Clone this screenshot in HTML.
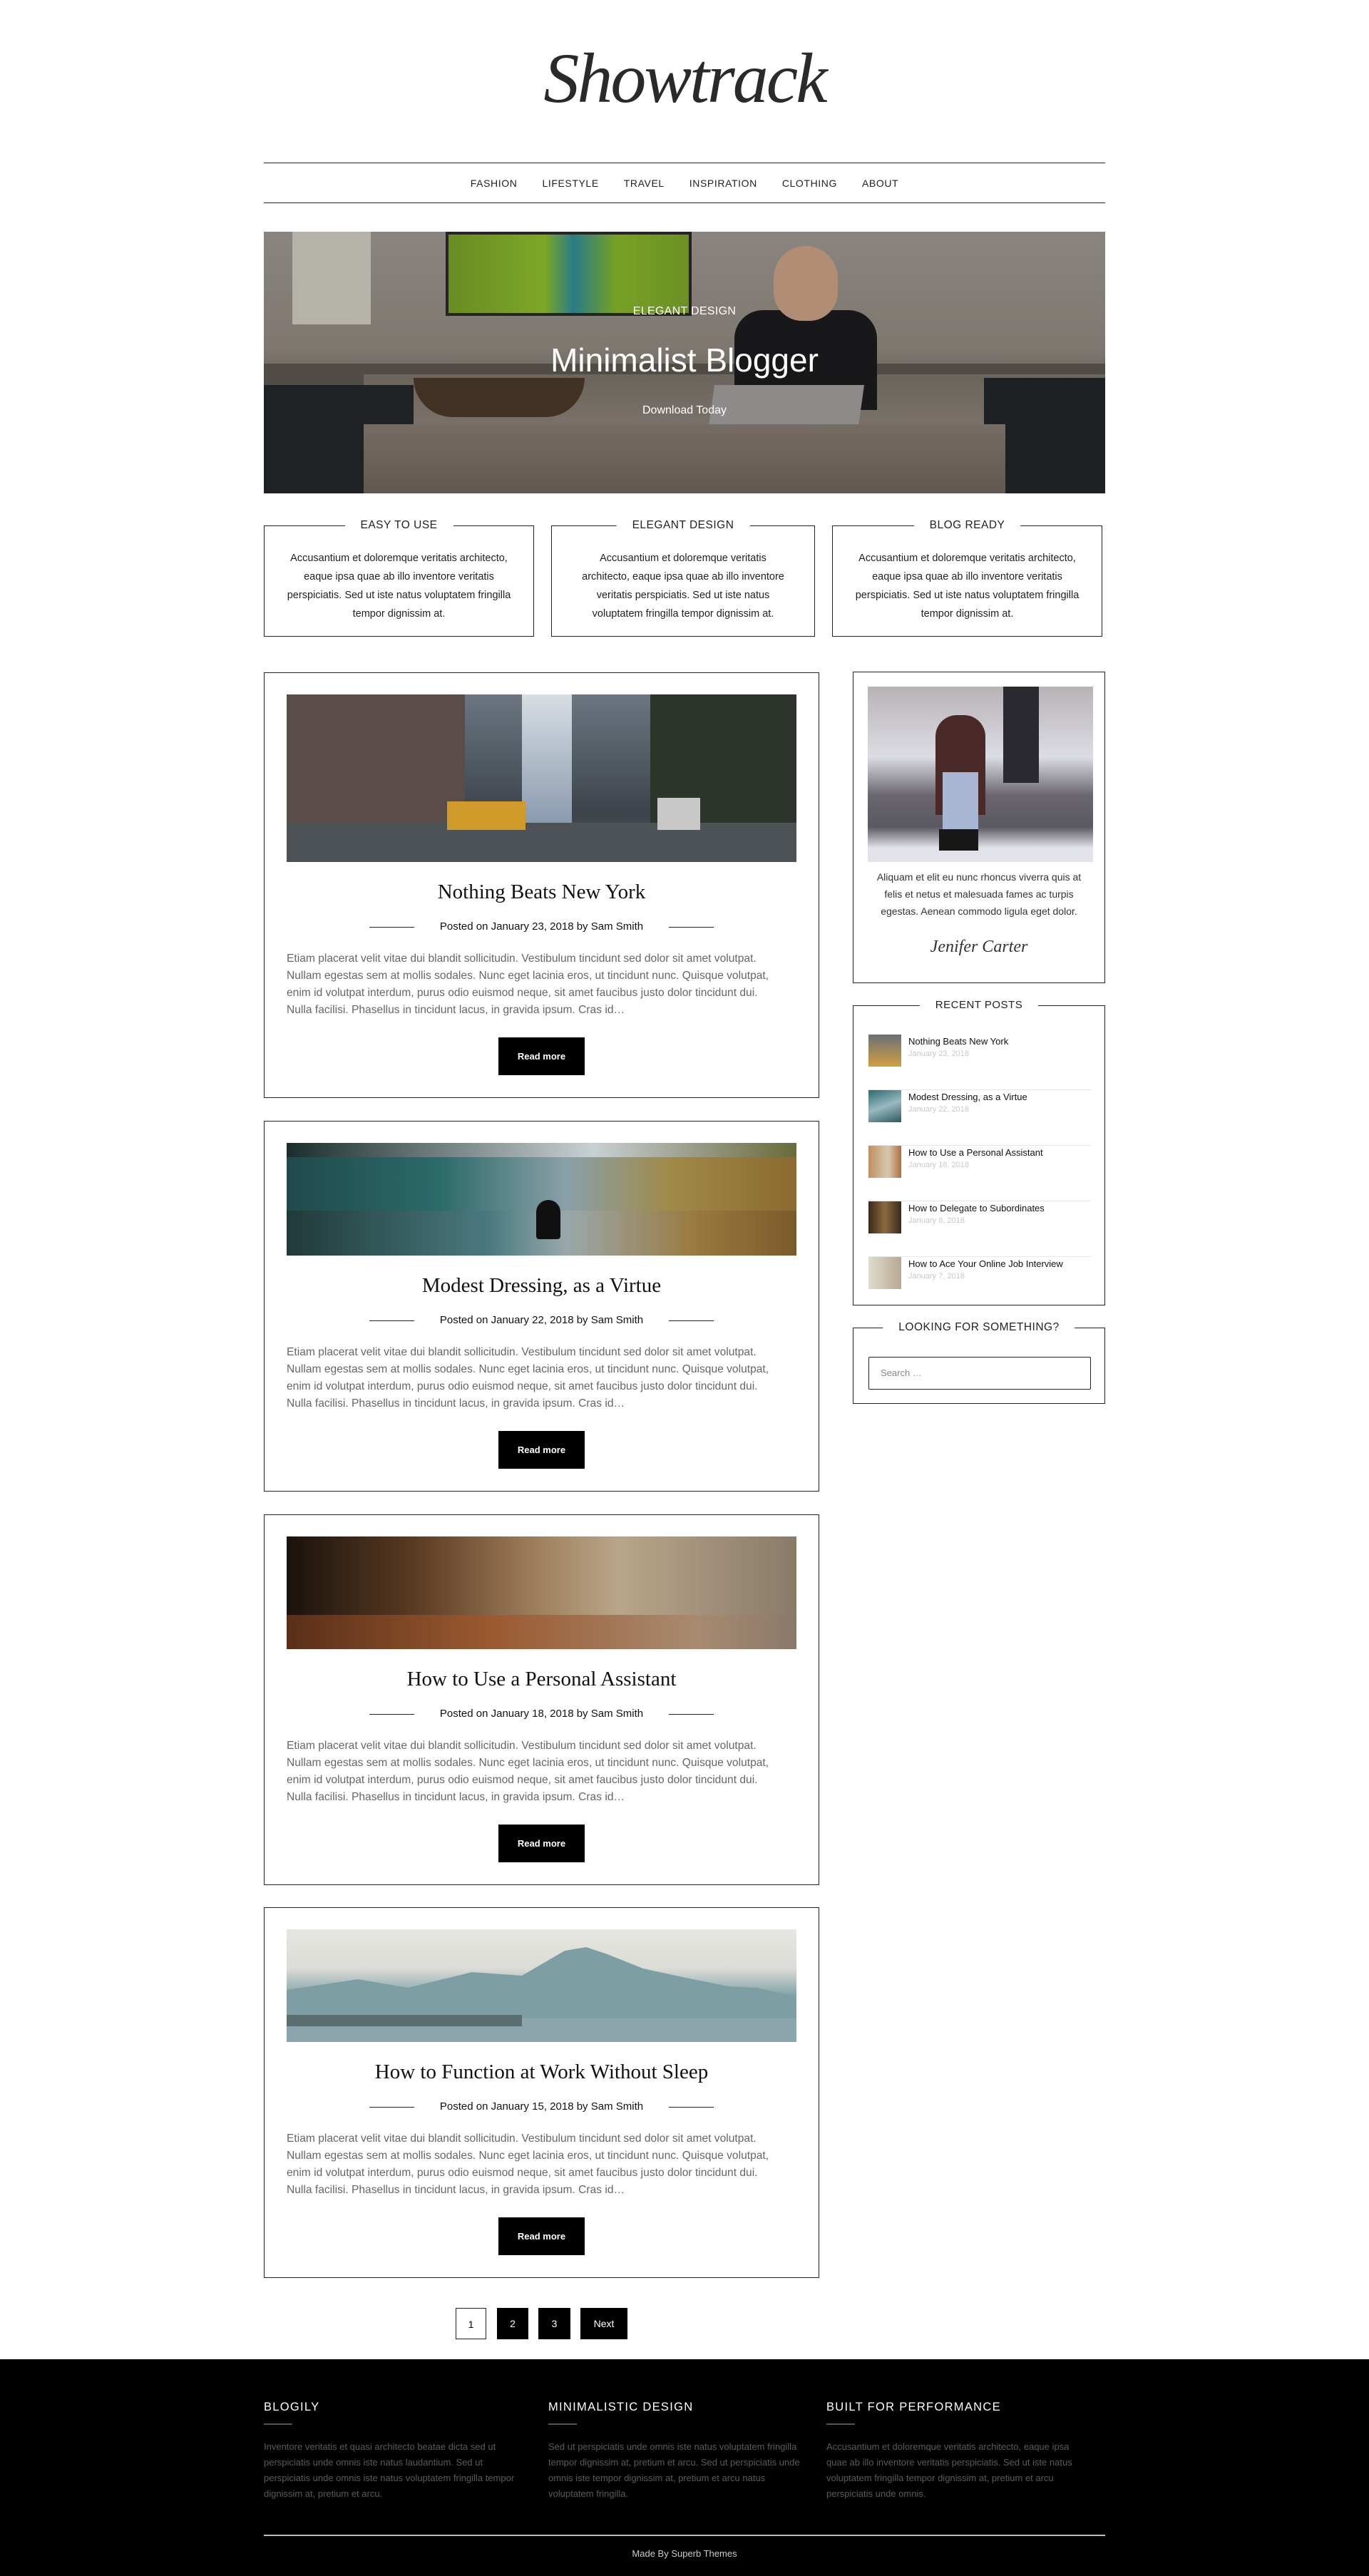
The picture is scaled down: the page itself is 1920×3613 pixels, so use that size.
<!DOCTYPE html>
<html><head><meta charset="utf-8"><style>
*{margin:0;padding:0;box-sizing:border-box}
body{width:1920px;height:3613px;position:relative;background:#fff;font-family:"Liberation Sans",sans-serif;color:#222;overflow:hidden}
.abs{position:absolute}
.logo{left:760px;top:40px;width:400px;height:140px;text-align:center;font-family:"Liberation Serif",serif;font-style:italic;font-size:100px;line-height:140px;color:#2a2a2a;letter-spacing:-3px}
.hl{left:370px;width:1180px;height:1px;background:#222}
.nav{left:370px;top:229px;width:1180px;height:55px;display:flex;justify-content:center;align-items:center;gap:35px;font-size:14px;letter-spacing:.6px;color:#222}
.hero{left:370px;top:325px;width:1180px;height:367px;overflow:hidden;background:#8a847c}
.hero div{position:absolute}
.feat{border:1px solid #222;top:737px;height:156px;font-size:14.5px;line-height:26px;text-align:center;padding:32px 26px 0;color:#222}
.ttl{position:absolute;top:-11px;left:50%;transform:translateX(-50%);background:#fff;padding:0 22px;font-size:15.5px;letter-spacing:.5px;line-height:20px;white-space:nowrap;color:#222}
.card{left:370px;width:779px;border:1px solid #222;padding:30px 31px 31px;text-align:center}
.card .img{width:715px;overflow:hidden;position:relative}
.card h2{font-family:"Liberation Serif",serif;font-weight:normal;font-size:29px;line-height:40px;margin-top:22px;color:#111}
.meta{margin-top:19px;line-height:20px;font-size:15px;position:relative;display:inline-block;padding:0 36px;color:#111}
.meta:before,.meta:after{content:"";position:absolute;top:10px;width:63px;height:1px;background:#222}
.meta:before{right:100%}.meta:after{left:100%}
.ex{margin-top:23px;text-align:left;font-size:15.6px;line-height:24px;color:#666;white-space:nowrap}
.btn{display:inline-block;margin-top:26px;width:121px;height:53px;background:#000;color:#fff;font-size:13px;font-weight:bold;line-height:53px}
.side{left:1196px;width:354px;border:1px solid #222}
.rp{position:absolute;left:21px;width:312px;height:78px;border-bottom:1px solid #e5e5e5}
.rp .th{position:absolute;left:0;top:0;width:46px;height:45px}
.rp .t{position:absolute;left:56px;top:2px;font-size:13px;color:#111}
.rp .d{position:absolute;left:56px;top:21px;font-size:11px;color:#c8c8c8}
.pg{top:3237px;height:44px;background:#000;color:#fff;font-size:14px;line-height:44px;text-align:center}
.foot{left:0;top:3309px;width:1920px;height:304px;background:#000}
.fc{position:absolute;top:55px;width:370px}
.fc h4{font-weight:normal;color:#fff;font-size:16.5px;letter-spacing:1.3px;line-height:24px}
.fc i{display:block;width:40px;height:2px;background:#555;margin-top:11px}
.fc p{margin-top:20px;font-size:13px;line-height:22px;color:#5a5a5a}
</style></head><body>

<div class="abs logo">Showtrack</div>
<div class="abs hl" style="top:228px"></div>
<div class="abs hl" style="top:284px"></div>
<div class="abs nav"><span>FASHION</span><span>LIFESTYLE</span><span>TRAVEL</span><span>INSPIRATION</span><span>CLOTHING</span><span>ABOUT</span></div>

<div class="abs hero">
 <div style="left:0;top:0;width:1180px;height:367px;background:linear-gradient(180deg,#9d9890 0%,#8f8880 45%,#5d5650 70%,#7d746c 100%)"></div>
 <div style="left:255px;top:0;width:345px;height:118px;background:linear-gradient(90deg,#76a02a,#8fbf2c 40%,#2f8d9a 52%,#88b828 70%,#7aa52a);border:4px solid #2a2a26"></div>
 <div style="left:40px;top:0;width:110px;height:130px;background:#cfcbc2"></div>
 <div style="left:0;top:185px;width:1180px;height:40px;background:#5d564f"></div>
 <div style="left:140px;top:200px;width:1040px;height:100px;background:linear-gradient(180deg,#7a726a,#91887f)"></div>
 <div style="left:0;top:215px;width:210px;height:152px;background:#24272b"></div>
 <div style="left:1010px;top:205px;width:170px;height:162px;background:#232629"></div>
 <div style="left:660px;top:110px;width:200px;height:140px;background:#1c1c1e;border-radius:40px 40px 0 0"></div>
 <div style="left:715px;top:20px;width:90px;height:105px;background:#c9a185;border-radius:45px 45px 40px 40px"></div>
 <div style="left:625px;top:215px;width:210px;height:100px;background:#a29e9c;transform:skewX(-8deg)"></div>
 <div style="left:140px;top:270px;width:900px;height:97px;background:linear-gradient(180deg,#867b72,#6e655d)"></div>
 <div style="left:210px;top:205px;width:240px;height:55px;background:#4a3a28;border-radius:0 0 120px 120px"></div>
 <div style="left:0;top:0;width:1180px;height:367px;background:rgba(0,0,0,.12)"></div>
 <div style="left:0;top:103px;width:1180px;text-align:center;color:#fff;font-size:16px;letter-spacing:.3px">ELEGANT DESIGN</div>
 <div style="left:0;top:150px;width:1180px;text-align:center;color:#fff;font-size:46px;line-height:60px">Minimalist Blogger</div>
 <div style="left:0;top:242px;width:1180px;text-align:center;color:#fff;font-size:16px">Download Today</div>
</div>

<div class="abs feat" style="left:370px;width:379px"><span class="ttl">EASY TO USE</span>Accusantium et doloremque veritatis architecto, eaque ipsa quae ab illo inventore veritatis perspiciatis. Sed ut iste natus voluptatem fringilla tempor dignissim at.</div>
<div class="abs feat" style="left:773px;width:370px;padding:32px 42px 0"><span class="ttl">ELEGANT DESIGN</span>Accusantium et doloremque veritatis architecto, eaque ipsa quae ab illo inventore veritatis perspiciatis. Sed ut iste natus voluptatem fringilla tempor dignissim at.</div>
<div class="abs feat" style="left:1167px;width:379px"><span class="ttl">BLOG READY</span>Accusantium et doloremque veritatis architecto, eaque ipsa quae ab illo inventore veritatis perspiciatis. Sed ut iste natus voluptatem fringilla tempor dignissim at.</div>

<!-- card 1 -->
<div class="abs card" style="top:943px">
 <div class="img" style="height:235px;background:linear-gradient(180deg,#6d7580 0%,#4e5660 45%,#3d434a 70%,#55595e 100%)">
  <div class="abs" style="left:330px;top:0;width:70px;height:180px;background:linear-gradient(180deg,#d8dde2,#8a9bb0)"></div>
  <div class="abs" style="left:0;top:0;width:250px;height:200px;background:#5a4c48"></div>
  <div class="abs" style="left:510px;top:0;width:205px;height:200px;background:#2d342c"></div>
  <div class="abs" style="left:0;top:180px;width:715px;height:55px;background:#4d5257"></div>
  <div class="abs" style="left:225px;top:150px;width:110px;height:40px;background:#d09a2a"></div>
  <div class="abs" style="left:520px;top:145px;width:60px;height:45px;background:#c8c8c8"></div>
 </div>
 <h2>Nothing Beats New York</h2>
 <div class="meta">Posted on January 23, 2018 by Sam Smith</div>
 <div class="ex">Etiam placerat velit vitae dui blandit sollicitudin. Vestibulum tincidunt sed dolor sit amet volutpat.<br>Nullam egestas sem at mollis sodales. Nunc eget lacinia eros, ut tincidunt nunc. Quisque volutpat,<br>enim id volutpat interdum, purus odio euismod neque, sit amet faucibus justo dolor tincidunt dui.<br>Nulla facilisi. Phasellus in tincidunt lacus, in gravida ipsum. Cras id…</div>
 <div class="btn">Read more</div>
</div>

<!-- card 2 -->
<div class="abs card" style="top:1572px">
 <div class="img" style="height:158px;background:linear-gradient(90deg,#1f4a4c 0%,#2c6a6a 30%,#8aa0a8 55%,#a08a4a 75%,#8a6a30 100%)">
  <div class="abs" style="left:0;top:0;width:715px;height:20px;background:linear-gradient(90deg,#1a2e2e,#c8d0d4 60%,#6a6a3a)"></div>
  <div class="abs" style="left:0;top:95px;width:715px;height:63px;background:linear-gradient(90deg,#203a38,#4a7a80 40%,#9aa8aa 55%,#9a7a40 80%,#7a5a2a)"></div>
  <div class="abs" style="left:350px;top:80px;width:34px;height:55px;background:#101010;border-radius:17px 17px 4px 4px"></div>
 </div>
 <h2>Modest Dressing, as a Virtue</h2>
 <div class="meta">Posted on January 22, 2018 by Sam Smith</div>
 <div class="ex">Etiam placerat velit vitae dui blandit sollicitudin. Vestibulum tincidunt sed dolor sit amet volutpat.<br>Nullam egestas sem at mollis sodales. Nunc eget lacinia eros, ut tincidunt nunc. Quisque volutpat,<br>enim id volutpat interdum, purus odio euismod neque, sit amet faucibus justo dolor tincidunt dui.<br>Nulla facilisi. Phasellus in tincidunt lacus, in gravida ipsum. Cras id…</div>
 <div class="btn">Read more</div>
</div>

<!-- card 3 -->
<div class="abs card" style="top:2124px">
 <div class="img" style="height:158px;background:linear-gradient(90deg,#1a120c 0%,#5a3a22 25%,#a0825e 50%,#b8a58a 65%,#8a7a68 100%)">
  <div class="abs" style="left:0;top:110px;width:715px;height:48px;background:linear-gradient(90deg,#5a2e18,#9a5a30 40%,#a88a70 80%,#8a7a6a)"></div>
 </div>
 <h2>How to Use a Personal Assistant</h2>
 <div class="meta">Posted on January 18, 2018 by Sam Smith</div>
 <div class="ex">Etiam placerat velit vitae dui blandit sollicitudin. Vestibulum tincidunt sed dolor sit amet volutpat.<br>Nullam egestas sem at mollis sodales. Nunc eget lacinia eros, ut tincidunt nunc. Quisque volutpat,<br>enim id volutpat interdum, purus odio euismod neque, sit amet faucibus justo dolor tincidunt dui.<br>Nulla facilisi. Phasellus in tincidunt lacus, in gravida ipsum. Cras id…</div>
 <div class="btn">Read more</div>
</div>

<!-- card 4 -->
<div class="abs card" style="top:2675px">
 <div class="img" style="height:158px;background:linear-gradient(180deg,#e6e6e0 0%,#dcdcd6 35%,#7aa0a4 60%,#6a8e94 75%,#8aa8b0 100%)">
  <svg class="abs" style="left:0;top:0" width="715" height="158"><polygon points="0,85 100,70 170,82 260,60 330,65 390,30 420,25 450,35 500,55 560,68 620,80 660,82 715,95 715,130 0,130" fill="#7d9ea2"/><rect x="0" y="125" width="715" height="33" fill="#8aa6ac"/><rect x="0" y="120" width="330" height="16" fill="#5a6e72"/></svg>
 </div>
 <h2>How to Function at Work Without Sleep</h2>
 <div class="meta">Posted on January 15, 2018 by Sam Smith</div>
 <div class="ex">Etiam placerat velit vitae dui blandit sollicitudin. Vestibulum tincidunt sed dolor sit amet volutpat.<br>Nullam egestas sem at mollis sodales. Nunc eget lacinia eros, ut tincidunt nunc. Quisque volutpat,<br>enim id volutpat interdum, purus odio euismod neque, sit amet faucibus justo dolor tincidunt dui.<br>Nulla facilisi. Phasellus in tincidunt lacus, in gravida ipsum. Cras id…</div>
 <div class="btn">Read more</div>
</div>

<!-- sidebar -->
<div class="abs side" style="top:942px;height:437px">
 <div class="abs" style="left:20px;top:20px;width:316px;height:246px;background:linear-gradient(180deg,#b8b2b6 0%,#dcdde4 40%,#6a6670 62%,#5a5860 80%,#e2e2ea 92%)">
  <div class="abs" style="left:190px;top:0;width:50px;height:135px;background:#2a2a30"></div>
  <div class="abs" style="left:95px;top:40px;width:70px;height:140px;background:#4a2a28;border-radius:30px 30px 0 0"></div>
  <div class="abs" style="left:105px;top:120px;width:50px;height:90px;background:#a8b6d4"></div>
  <div class="abs" style="left:100px;top:200px;width:55px;height:30px;background:#181818"></div>
 </div>
 <div class="abs" style="left:20px;top:275px;width:312px;text-align:center;font-size:14px;line-height:24px;color:#333">Aliquam et elit eu nunc rhoncus viverra quis at felis et netus et malesuada fames ac turpis egestas. Aenean commodo ligula eget dolor.</div>
 <div class="abs" style="left:0;top:372px;width:352px;text-align:center;font-family:'Liberation Serif',serif;font-style:italic;font-size:24px;color:#333">Jenifer Carter</div>
</div>

<div class="abs side" style="top:1410px;height:421px">
 <span class="ttl" style="font-size:15px">RECENT POSTS</span>
 <div class="rp" style="top:40px"><div class="th" style="background:linear-gradient(180deg,#6a7078,#d0a040)"></div><div class="t">Nothing Beats New York</div><div class="d">January 23, 2018</div></div>
 <div class="rp" style="top:118px"><div class="th" style="background:linear-gradient(160deg,#2a6a70,#9ab8c0 50%,#2a5a60)"></div><div class="t">Modest Dressing, as a Virtue</div><div class="d">January 22, 2018</div></div>
 <div class="rp" style="top:196px"><div class="th" style="background:linear-gradient(90deg,#c09060,#d8c8b0 60%,#b07040)"></div><div class="t">How to Use a Personal Assistant</div><div class="d">January 18, 2018</div></div>
 <div class="rp" style="top:274px"><div class="th" style="background:linear-gradient(90deg,#3a2a1a,#8a6a40 50%,#3a2a1a)"></div><div class="t">How to Delegate to Subordinates</div><div class="d">January 8, 2018</div></div>
 <div class="rp" style="top:352px;border:none"><div class="th" style="background:linear-gradient(90deg,#e0dcd0,#b8a890)"></div><div class="t">How to Ace Your Online Job Interview</div><div class="d">January 7, 2018</div></div>
</div>

<div class="abs side" style="top:1862px;height:107px">
 <span class="ttl" style="font-size:15.5px">LOOKING FOR SOMETHING?</span>
 <div class="abs" style="left:21px;top:40px;width:312px;height:46px;border:1px solid #222;border-radius:2px;font-size:13px;color:#888;padding-left:16px;line-height:44px">Search …</div>
</div>

<div class="abs pg" style="left:639px;width:43px;background:#fff;color:#000;border:1px solid #222">1</div>
<div class="abs pg" style="left:697px;width:44px">2</div>
<div class="abs pg" style="left:755px;width:45px">3</div>
<div class="abs pg" style="left:814px;width:66px">Next</div>

<div class="abs foot">
 <div class="fc" style="left:370px"><h4>BLOGILY</h4><i></i><p>Inventore veritatis et quasi architecto beatae dicta sed ut perspiciatis unde omnis iste natus laudantium. Sed ut perspiciatis unde omnis iste natus voluptatem fringilla tempor dignissim at, pretium et arcu.</p></div>
 <div class="fc" style="left:769px"><h4>MINIMALISTIC DESIGN</h4><i></i><p>Sed ut perspiciatis unde omnis iste natus voluptatem fringilla tempor dignissim at, pretium et arcu. Sed ut perspiciatis unde omnis iste tempor dignissim at, pretium et arcu natus voluptatem fringilla.</p></div>
 <div class="fc" style="left:1159px"><h4>BUILT FOR PERFORMANCE</h4><i></i><p>Accusantium et doloremque veritatis architecto, eaque ipsa quae ab illo inventore veritatis perspiciatis. Sed ut iste natus voluptatem fringilla tempor dignissim at, pretium et arcu perspiciatis unde omnis.</p></div>
 <div class="abs" style="left:370px;top:246px;width:1180px;height:2px;background:#bbb"></div>
 <div class="abs" style="left:0;top:265px;width:1920px;text-align:center;font-size:13px;color:#ccc">Made By Superb Themes</div>
</div>
</body></html>
